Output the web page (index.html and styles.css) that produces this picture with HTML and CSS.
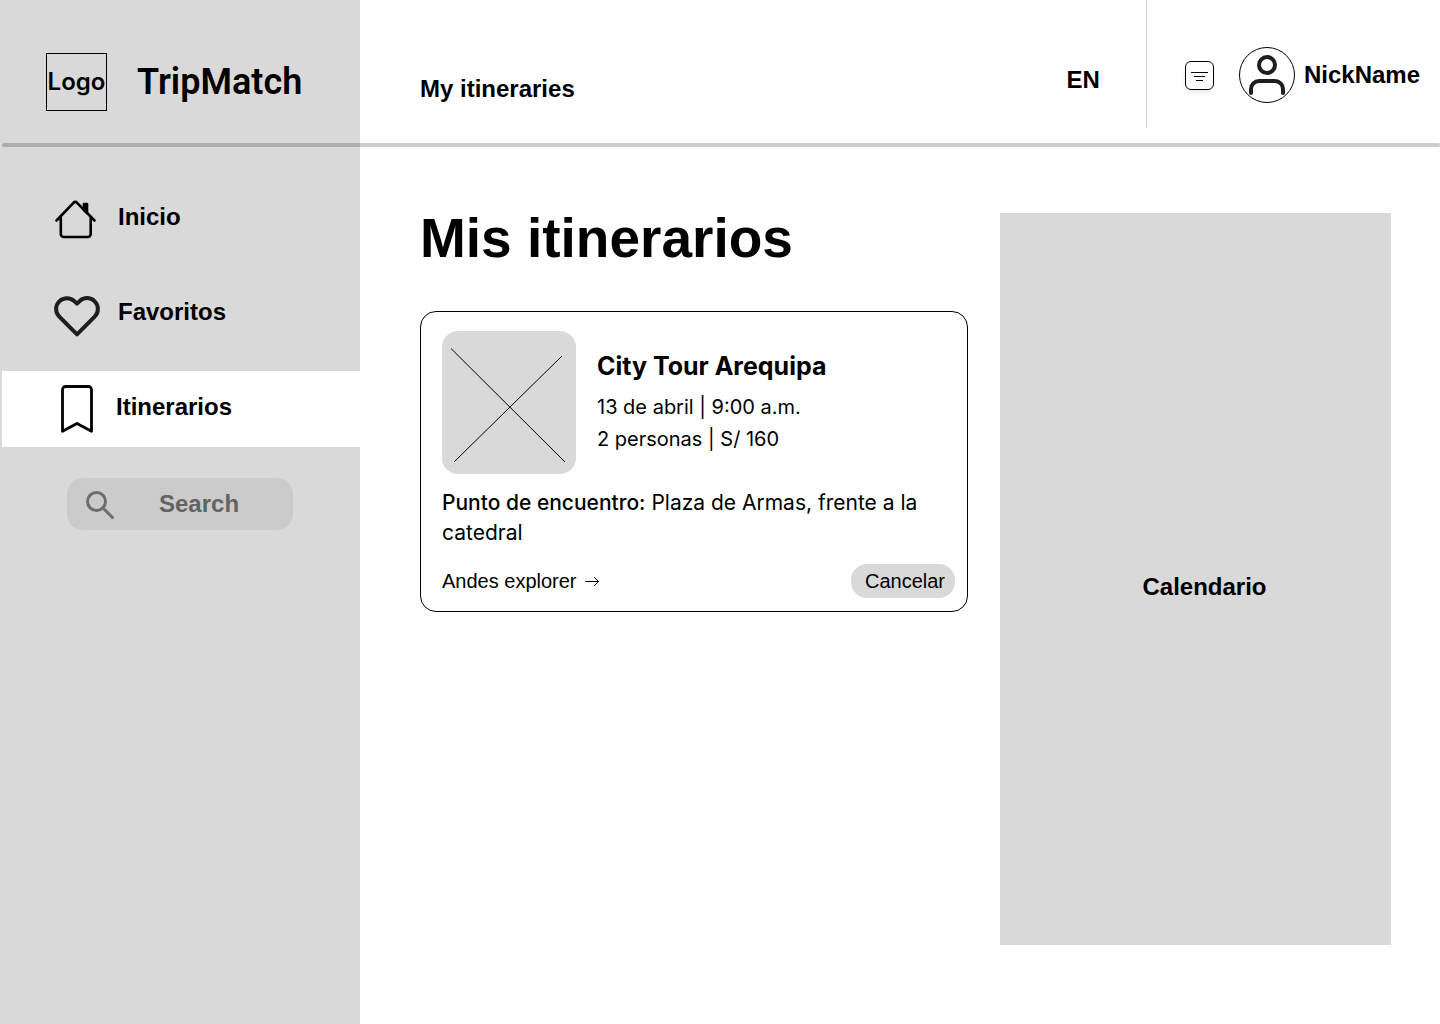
FILE: index.html
```html
<!DOCTYPE html>
<html lang="es">
<head>
<meta charset="utf-8">
<meta name="viewport" content="width=device-width, initial-scale=1">
<title>TripMatch</title>
<link rel="stylesheet" href="styles.css">
</head>
<body>
<div class="app">
  <header class="topbar">
    <div class="brand">
      <span class="brand-logo">Logo</span>
      <span class="brand-name">TripMatch</span>
    </div>
    <div class="topbar-main">
      <p class="section-name">My itineraries</p>
      <button class="language" type="button">EN</button>
      <div class="account">
        <button class="filter" type="button" aria-label="Filtrar">
          <svg width="27" height="27" viewBox="0 0 27 27" fill="none" stroke="#000" stroke-width="1"><path d="M5 10.500h17M8 14.500h11M10 18.500h7"/></svg>
        </button>
        <a class="user" href="#perfil">
          <svg width="56" height="56" viewBox="0 0 56 56" fill="none">
            <circle cx="28" cy="28" r="27.500" fill="#fff" stroke="#000"/>
            <circle cx="28" cy="18" r="8" stroke="#1e1e1e" stroke-width="4"/>
            <path d="M12 46v-4a8 8 0 0 1 8-8h16a8 8 0 0 1 8 8v4" stroke="#1e1e1e" stroke-width="4" stroke-linecap="round"/>
          </svg>
          <span>NickName</span>
        </a>
      </div>
    </div>
  </header>
  <div class="body">
    <aside class="sidebar">
      <nav class="nav">
        <a class="nav-item" href="#inicio">
          <svg width="46" height="50" viewBox="0 0 46 50" fill="none" stroke="#000" stroke-width="2.600" stroke-linecap="round" stroke-linejoin="round">
            <path d="M2.500 26.500 19.500 8.800a2.600 2.600 0 0 1 3.600 0L40.500 26.500M6.800 23v17a3 3 0 0 0 3 3h23.900a3 3 0 0 0 3-3V23"/>
            <path d="M30 10h3v9l-3-3z" fill="#000"/>
          </svg>
          <span>Inicio</span>
        </a>
        <a class="nav-item" href="#favoritos">
          <svg width="46" height="50" viewBox="0 0 46 50" fill="none" stroke="#1e1e1e" stroke-width="4" stroke-linecap="round" stroke-linejoin="round">
            <path d="M40.700 12.300a10.800 10.800 0 0 0-15.300 0L23 14.700l-2.400-2.400A10.800 10.800 0 0 0 5.300 27.600L23 45.300l17.700-17.700a10.800 10.800 0 0 0 0-15.300z"/>
          </svg>
          <span>Favoritos</span>
        </a>
        <a class="nav-item nav-item-active" href="#itinerarios" aria-current="page">
          <svg width="46" height="50" viewBox="0 0 46 50" fill="none" stroke="#000" stroke-width="2.800" stroke-linejoin="round">
            <path d="M8.500 47.300V5.500a3 3 0 0 1 3-3h23a3 3 0 0 1 3 3v41.800L23 39.500z"/>
          </svg>
          <span>Itinerarios</span>
        </a>
      </nav>
      <label class="search">
        <svg width="28" height="30" viewBox="0 0 28 30" fill="none" stroke="#6e6e6e" stroke-width="3" stroke-linecap="round"><circle cx="10.500" cy="12.500" r="9"/><path d="M17 19l9.500 9.500"/></svg>
        <input type="search" placeholder="Search" aria-label="Search">
      </label>
    </aside>
    <main class="content">
      <section class="itineraries">
        <h1>Mis itinerarios</h1>
        <article class="card">
          <div class="card-top">
            <svg class="photo" width="134" height="143" viewBox="0 0 134 143" stroke="#000" fill="none"><path d="M9 17.500 123 131M12 131 120 25"/></svg>
            <div class="card-info">
              <h2>City Tour Arequipa</h2>
              <p>13 de abril | 9:00 a.m.</p>
              <p>2 personas | S/ 160</p>
            </div>
          </div>
          <p class="meeting"><strong>Punto de encuentro:</strong> Plaza de Armas, frente a la catedral</p>
          <div class="card-footer">
            <a class="operator" href="#andes-explorer">Andes explorer
              <svg width="14" height="10" viewBox="0 0 14 10" fill="none" stroke="#000" stroke-linecap="round" stroke-linejoin="round"><path d="M.5 5.500h13M9.500 1.500l4 4-4 4"/></svg>
            </a>
            <button class="cancel" type="button">Cancelar</button>
          </div>
        </article>
      </section>
      <section class="calendar">
        <h2>Calendario</h2>
      </section>
    </main>
  </div>
</div>
</body>
</html>
```
FILE: styles.css
```css
* { box-sizing: border-box; }

body {
  margin: 0;
  background: #fff;
  color: #000;
  font: 700 24px/32px "Liberation Sans", Arial, sans-serif;
}

h1, h2, p { margin: 0; font: inherit; }
a { color: inherit; text-decoration: none; }
button { font: inherit; color: inherit; border: 0; padding: 0; background: none; cursor: pointer; }
svg { display: block; flex: none; }

.app { min-height: 100vh; display: flex; flex-direction: column; }

/* Top bar */
.topbar { position: relative; display: flex; min-height: 147px; }
.topbar::after {
  content: "";
  position: absolute;
  inset: auto 0 0 2px;
  height: 4px;
  border-radius: 2px;
  background: rgba(0, 0, 0, .2);
}
.brand {
  flex: none;
  width: 25%;
  display: flex;
  align-items: center;
  gap: 30px;
  padding: 34px 16px 17px 46px;
  background: #d9d9d9;
}
.brand-logo {
  flex: none;
  width: 61px;
  height: 58px;
  display: flex;
  align-items: center;
  justify-content: center;
  border: 1px solid #000;
  font: 600 24px/32px Inter, sans-serif;
}
.brand-name { font: 600 36px/40px Roboto, sans-serif; }
.topbar-main { flex: 1; display: flex; align-items: flex-start; padding-left: 60px; }
.section-name { flex: 1; padding-top: 73px; }
.language { margin: 64px 46px 0 0; }
.account {
  display: flex;
  align-items: center;
  gap: 25px;
  height: 128px;
  padding: 22px 20px 0 38px;
  border-left: 1px solid #ccc;
}
.filter {
  border: 1px solid #000;
  border-radius: 6px;
  background: #fff;
  box-shadow: 0 4px 4px rgba(0, 0, 0, .06);
}
.user { display: flex; align-items: center; gap: 9px; }

/* Sidebar */
.body { flex: 1; display: flex; }
.sidebar { flex: none; width: 25%; padding-top: 34px; background: #d9d9d9; }
.nav { display: flex; flex-direction: column; gap: 19px; }
.nav-item {
  display: flex;
  align-items: center;
  gap: 18px;
  height: 76px;
  padding-left: 54px;
}
.nav-item span { padding-bottom: 4px; }
.nav-item-active { margin-left: 2px; padding-left: 52px; gap: 16px; background: #fff; }
.search {
  display: flex;
  align-items: center;
  gap: 45px;
  height: 52px;
  margin: 31px 67px;
  padding: 0 19px;
  border-radius: 16px;
  background: #cbcbcb;
}
.search input {
  flex: 1;
  min-width: 0;
  padding: 0;
  border: 0;
  background: none;
  font: inherit;
  color: #636363;
}
.search input::placeholder { color: #636363; opacity: 1; }

/* Content */
.content {
  flex: 1;
  display: grid;
  grid-template-columns: 548fr 391fr;
  align-items: start;
  gap: 32px;
  padding: 66px 49px 48px 60px;
}
h1 { font-size: 55px; line-height: 50px; font-weight: 700; margin-bottom: 48px; }
.card {
  padding: 19px 12px 13px 21px;
  border: 1px solid #000;
  border-radius: 16px;
  font: 400 20px/30px Inter, sans-serif;
}
.card-top { display: flex; align-items: center; gap: 21px; }
.photo { border-radius: 16px; background: #d9d9d9; }
.card-info { line-height: 32px; padding-bottom: 2px; }
.card-info h2 { font-size: 25px; font-weight: 700; line-height: 36px; margin-bottom: 7px; }
.meeting { margin: 14px 0 16px; font-size: 21px; }
.meeting strong { font-weight: 500; }
.card-footer {
  display: flex;
  align-items: center;
  justify-content: space-between;
  font: 400 20px/30px "Liberation Sans", Arial, sans-serif;
}
.operator { display: flex; align-items: center; gap: 8px; }
.cancel { height: 34px; padding: 0 10px 0 14px; border-radius: 16px; background: #d9d9d9; }
.calendar {
  display: flex;
  align-items: center;
  justify-content: center;
  min-height: 732px;
  padding: 16px 0 0 18px;
  background: #d9d9d9;
}
```
